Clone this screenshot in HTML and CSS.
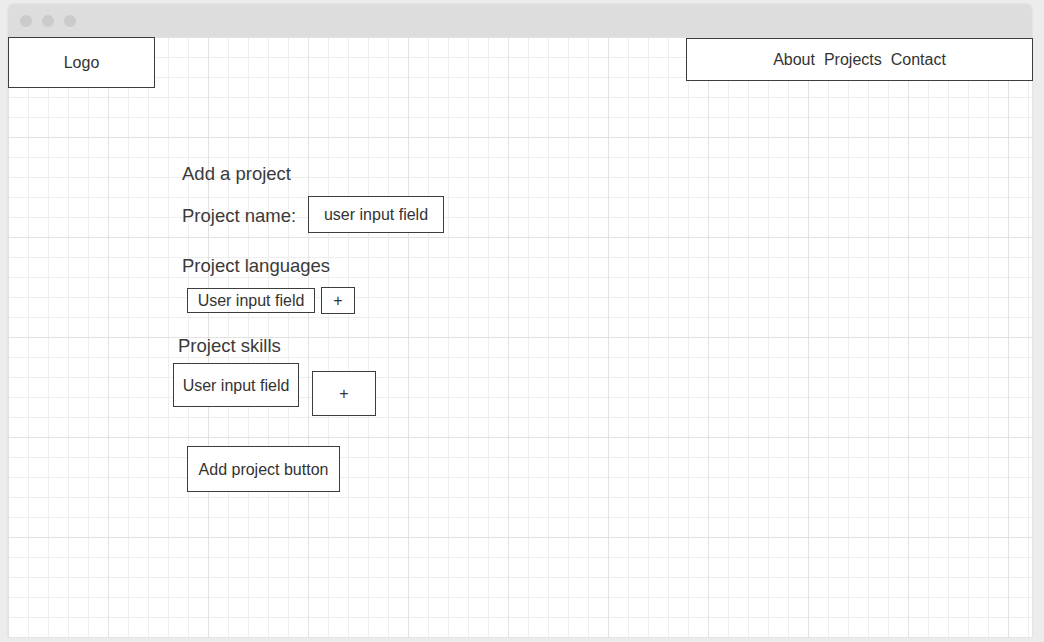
FILE: index.html
```html
<!DOCTYPE html>
<html lang="en">
<head>
<meta charset="utf-8">
<title>Add a project – wireframe</title>
<link rel="stylesheet" href="styles.css">
</head>
<body>
<div class="window">
  <div class="titlebar">
    <span class="dot"></span>
    <span class="dot"></span>
    <span class="dot"></span>
  </div>
  <div class="canvas">
    <header class="header">
      <div class="logo">Logo</div>
      <nav class="nav">
        <a>About</a>
        <a>Projects</a>
        <a>Contact</a>
      </nav>
    </header>
    <main class="form">
      <h2 class="heading">Add a project</h2>
      <div class="name-row">
        <span class="label">Project name:</span>
        <div class="box name-input">user input field</div>
      </div>
      <h2 class="heading languages-heading">Project languages</h2>
      <div class="lang-row">
        <div class="box lang-input">User input field</div>
        <div class="box lang-plus">+</div>
      </div>
      <h2 class="heading skills-heading">Project skills</h2>
      <div class="skills-row">
        <div class="box skills-input">User input field</div>
        <div class="box skills-plus">+</div>
      </div>
      <div class="box submit">Add project button</div>
    </main>
  </div>
</div>
</body>
</html>
```

FILE: styles.css
```css
* {
  box-sizing: border-box;
}

html, body {
  margin: 0;
  padding: 0;
}

body {
  width: 1044px;
  height: 642px;
  background: #ececec;
  font-family: "Liberation Sans", Arial, Helvetica, sans-serif;
  color: #333333;
  overflow: hidden;
}

.window {
  margin: 4px 12px 0 8px;
  height: 633px;
  border-radius: 6px 6px 0 0;
  box-shadow: 0 0 2px rgba(0, 0, 0, 0.12);
  display: flex;
  flex-direction: column;
}

.titlebar {
  height: 33px;
  flex: none;
  background: #dddddd;
  border-radius: 6px 6px 0 0;
  display: flex;
  align-items: center;
  gap: 10px;
  padding-left: 12px;
}

.dot {
  width: 12px;
  height: 12px;
  border-radius: 50%;
  background: #cbcbcb;
}

.canvas {
  flex: 1;
  background-color: #ffffff;
  background-image:
    linear-gradient(to right, #e2e2e2 1px, transparent 1px),
    linear-gradient(to bottom, #e2e2e2 1px, transparent 1px),
    linear-gradient(to right, #eeeeee 1px, transparent 1px),
    linear-gradient(to bottom, #eeeeee 1px, transparent 1px);
  background-size: 100px 100px, 100px 100px, 20px 20px, 20px 20px;
}

.header {
  display: flex;
  justify-content: space-between;
  align-items: flex-start;
}

.logo {
  width: 147px;
  height: 51px;
  border: 1px solid #3d3d3d;
  background: #ffffff;
  display: flex;
  align-items: center;
  justify-content: center;
  font-size: 16px;
  line-height: 18px;
}

.nav {
  width: 347px;
  height: 43px;
  margin-top: 1px;
  margin-right: -1px;
  border: 1px solid #3d3d3d;
  background: #ffffff;
  display: flex;
  align-items: center;
  justify-content: center;
  gap: 9px;
  font-size: 16px;
  line-height: 18px;
}

.nav a {
  color: #333333;
}

.form {
  margin-top: 75px;
  padding-left: 174px;
  display: flex;
  flex-direction: column;
  align-items: flex-start;
}

.heading {
  margin: 0;
  font-size: 18.5px;
  font-weight: normal;
  line-height: 21px;
  color: #3a3a3a;
}

.box {
  border: 1px solid #3d3d3d;
  background: #ffffff;
  display: flex;
  align-items: center;
  justify-content: center;
  font-size: 16px;
  line-height: 18px;
}

.name-row {
  margin-top: 12px;
  display: flex;
  align-items: center;
}

.label {
  min-width: 126px;
  font-size: 18.5px;
  line-height: 21px;
  padding-top: 1px;
  color: #3a3a3a;
}

.name-input {
  width: 136px;
  height: 37px;
}

.languages-heading {
  margin-top: 22px;
}

.lang-row {
  margin-top: 11px;
  margin-left: 5px;
  display: flex;
  align-items: center;
  gap: 6px;
}

.lang-input {
  width: 128px;
  height: 25px;
}

.lang-plus {
  width: 34px;
  height: 27px;
}

.skills-heading {
  margin-top: 21px;
  margin-left: -4px;
}

.skills-row {
  margin-top: 7px;
  margin-left: -9px;
  display: flex;
  align-items: flex-start;
  gap: 13px;
}

.skills-input {
  width: 126px;
  height: 44px;
  padding-top: 2px;
}

.skills-plus {
  width: 64px;
  height: 45px;
  margin-top: 8px;
}

.submit {
  margin-top: 30px;
  margin-left: 5px;
  width: 153px;
  height: 46px;
  padding-top: 2px;
}
```
